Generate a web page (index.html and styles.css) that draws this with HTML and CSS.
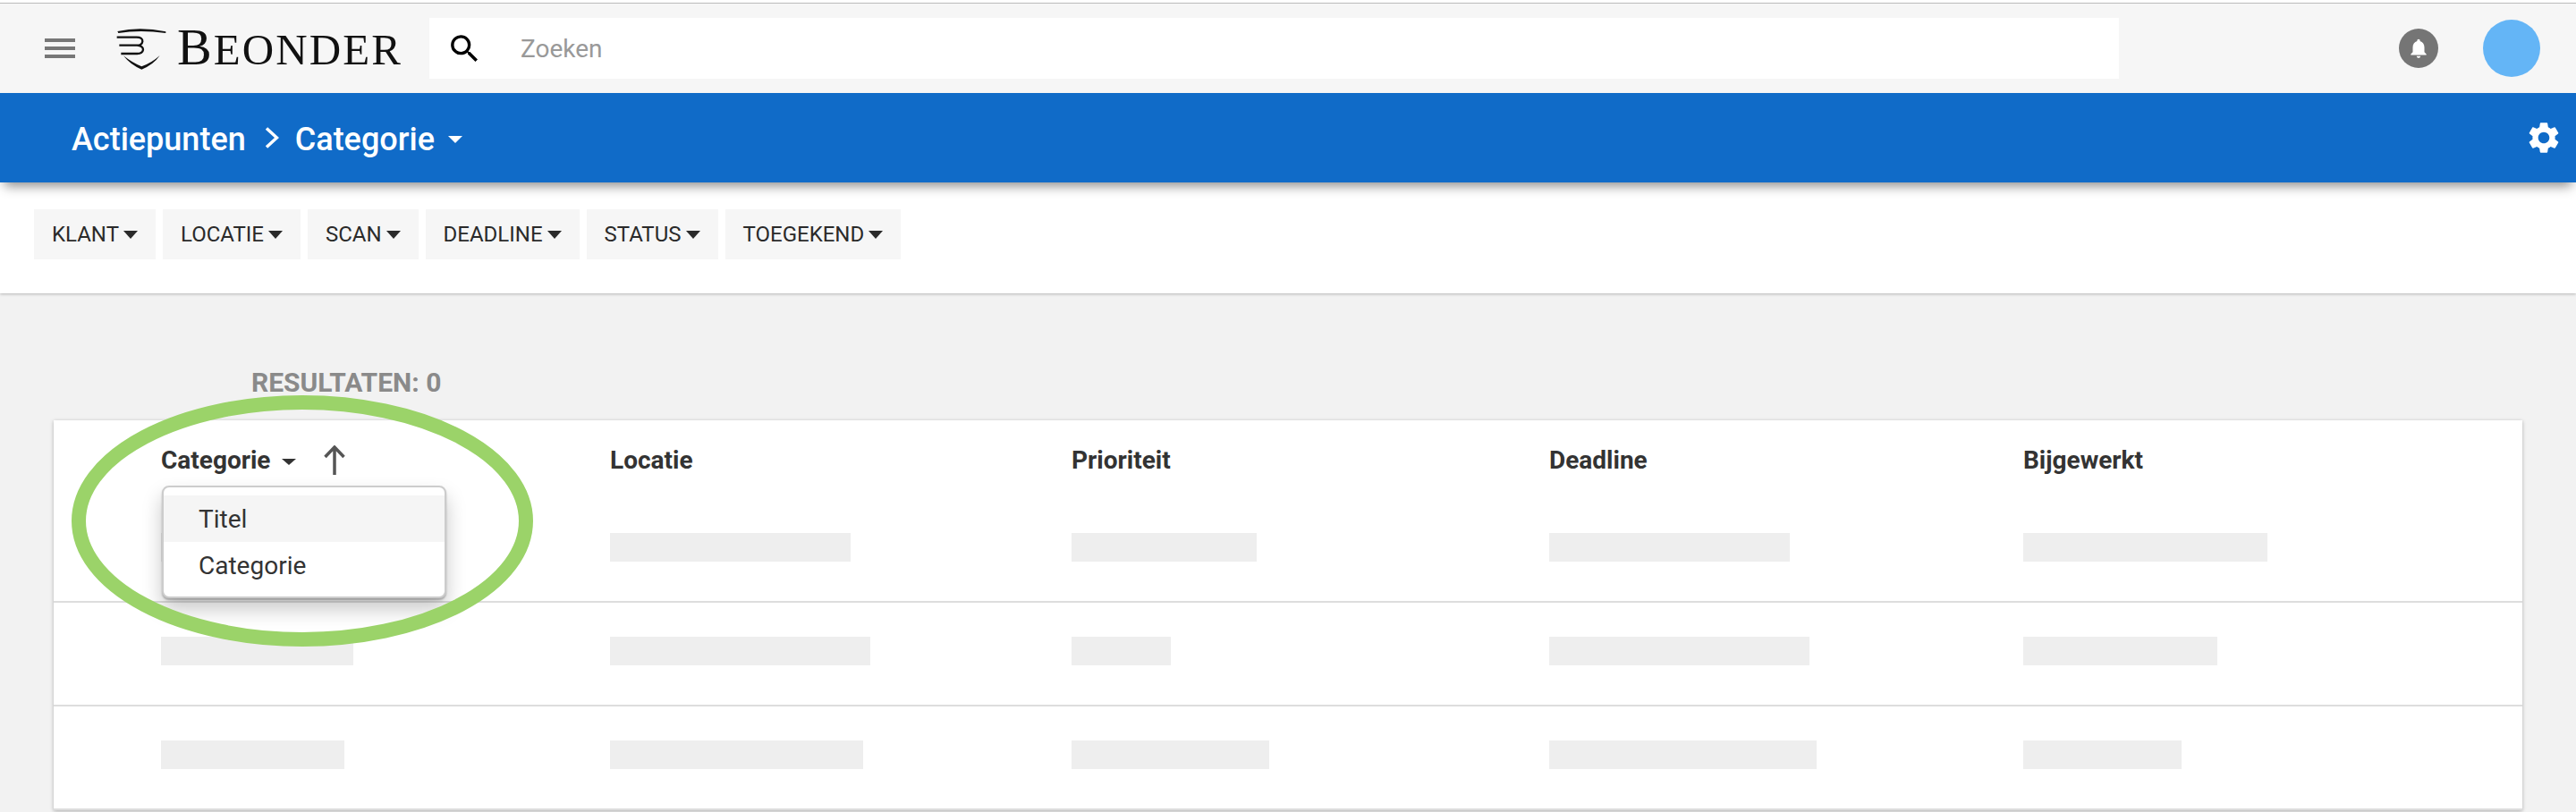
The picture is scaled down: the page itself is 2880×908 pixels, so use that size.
FILE: index.html
```html
<!DOCTYPE html>
<html lang="nl">
<head>
<meta charset="utf-8">
<title>Beonder - Actiepunten</title>
<link rel="stylesheet" href="styles.css">
</head>
<body>
<div class="page">
  <header class="topbar">
    <div class="hamburger"><span></span><span></span><span></span></div>
    <div class="brand">
      <svg class="brand-mark" viewBox="30 24 168 147" width="56" height="49">
        <path class="mark-fill" d="M34 39Q110 22 196 40L196 45Q110 33 37 45Z"/>
        <path class="mark-stroke" d="M32 59H98Q119 59 118 73Q116 86 100 86H40M100 86Q120 88 120 101Q118 114 100 114H46"/>
        <path class="mark-fill" d="M54 121Q86 146 115 157Q150 144 176 120Q156 150 115 167Q78 152 54 121Z"/>
      </svg>
      <div class="wordmark"><span class="wordmark-cap">B</span>EONDER</div>
    </div>
    <div class="search">
      <svg class="search-icon" viewBox="0 0 24 24" width="41" height="41"><path d="M15.5 14h-.79l-.28-.27A6.47 6.47 0 0 0 16 9.5 6.5 6.5 0 1 0 9.5 16c1.61 0 3.09-.59 4.23-1.57l.27.28v.79l5 4.99L20.49 19l-4.99-5zm-6 0C7.01 14 5 11.99 5 9.5S7.01 5 9.5 5 14 7.01 14 9.5 11.99 14 9.5 14z"/></svg>
      <span class="search-text">Zoeken</span>
    </div>
    <div class="bell">
      <svg viewBox="0 0 24 24" width="26" height="26"><path d="M12 22c1.1 0 2-.9 2-2h-4c0 1.1.9 2 2 2zm6-6v-5c0-3.07-1.63-5.64-4.5-6.32V4c0-.83-.67-1.5-1.5-1.5s-1.5.67-1.5 1.5v.68C7.64 5.36 6 7.92 6 11v5l-2 2v1h16v-1l-2-2z"/></svg>
    </div>
    <div class="avatar"></div>
  </header>

  <nav class="crumbbar">
    <span class="crumb">Actiepunten</span>
    <svg class="crumb-sep" viewBox="0 0 16 24" width="16" height="24"><path d="M2 1.5L13.5 12L2 22.5"/></svg>
    <span class="crumb">Categorie</span>
    <span class="crumb-caret"></span>
    <svg class="gear" viewBox="0 0 24 24" width="42" height="42"><path d="M19.14 12.94c.04-.3.06-.61.06-.94 0-.32-.02-.64-.07-.94l2.03-1.58a.49.49 0 0 0 .12-.61l-1.92-3.32a.488.488 0 0 0-.59-.22l-2.39.96c-.5-.38-1.03-.7-1.62-.94l-.36-2.54a.484.484 0 0 0-.48-.41h-3.84c-.24 0-.43.17-.47.41l-.36 2.54c-.59.24-1.13.57-1.62.94l-2.39-.96c-.22-.08-.47 0-.59.22L2.74 8.87c-.12.21-.08.47.12.61l2.03 1.58c-.05.3-.09.63-.09.94s.02.64.07.94l-2.03 1.58a.49.49 0 0 0-.12.61l1.92 3.32c.12.22.37.29.59.22l2.39-.96c.5.38 1.03.7 1.62.94l.36 2.54c.05.24.24.41.48.41h3.84c.24 0 .44-.17.47-.41l.36-2.54c.59-.24 1.13-.56 1.62-.94l2.39.96c.22.08.47 0 .59-.22l1.92-3.32c.12-.22.07-.47-.12-.61l-2.01-1.58zM12 15.6c-1.98 0-3.6-1.62-3.6-3.6s1.62-3.6 3.6-3.6 3.6 1.62 3.6 3.6-1.62 3.6-3.6 3.6z"/></svg>
  </nav>

  <section class="filters">
    <button class="filter">KLANT<span class="filter-caret"></span></button>
    <button class="filter">LOCATIE<span class="filter-caret"></span></button>
    <button class="filter">SCAN<span class="filter-caret"></span></button>
    <button class="filter">DEADLINE<span class="filter-caret"></span></button>
    <button class="filter">STATUS<span class="filter-caret"></span></button>
    <button class="filter">TOEGEKEND<span class="filter-caret"></span></button>
  </section>

  <main class="content">
    <div class="results">RESULTATEN: 0</div>
    <div class="card">
      <div class="row head">
        <div class="col-head">Categorie<span class="head-caret"></span>
          <svg class="sort-arrow" viewBox="0 0 24 34" width="24" height="34"><path d="M12 33V2M1.5 13L12 2L22.5 13"/></svg>
        </div>
        <div class="col-head">Locatie</div>
        <div class="col-head">Prioriteit</div>
        <div class="col-head">Deadline</div>
        <div class="col-head">Bijgewerkt</div>
      </div>
      <div class="row item">
        <div><div class="skeleton" style="width:215px"></div></div>
        <div><div class="skeleton" style="width:269px"></div></div>
        <div><div class="skeleton" style="width:207px"></div></div>
        <div><div class="skeleton" style="width:269px"></div></div>
        <div><div class="skeleton" style="width:273px"></div></div>
      </div>
      <div class="row item">
        <div><div class="skeleton" style="width:215px"></div></div>
        <div><div class="skeleton" style="width:291px"></div></div>
        <div><div class="skeleton" style="width:111px"></div></div>
        <div><div class="skeleton" style="width:291px"></div></div>
        <div><div class="skeleton" style="width:217px"></div></div>
      </div>
      <div class="row item">
        <div><div class="skeleton" style="width:205px"></div></div>
        <div><div class="skeleton" style="width:283px"></div></div>
        <div><div class="skeleton" style="width:221px"></div></div>
        <div><div class="skeleton" style="width:299px"></div></div>
        <div><div class="skeleton" style="width:177px"></div></div>
      </div>
      <div class="menu">
        <div class="menu-item active">Titel</div>
        <div class="menu-item">Categorie</div>
      </div>
    </div>
  </main>

  <svg class="highlight" viewBox="0 0 516 281" width="516" height="281"><ellipse cx="258" cy="140.5" rx="250" ry="132.5"/></svg>
</div>
</body>
</html>
```
FILE: styles.css
```css
* { box-sizing: border-box; }
html, body { margin: 0; height: 908px; overflow: hidden; }
body { background: #f2f2f2; font-family: Roboto, "Liberation Sans", sans-serif; color: #333; }
.page { position: relative; height: 908px; overflow: hidden; padding-top: 3px; background: #f2f2f2; }
.page::before { content: ""; position: absolute; left: 0; right: 0; top: 0; height: 3px; background: #fff; }

.topbar { display: flex; align-items: center; height: 101px; background: #f6f6f6; border-top: 1px solid #bbb; padding-left: 50px; }
.hamburger { display: flex; flex-direction: column; gap: 5px; width: 34px; }
.hamburger span { display: block; height: 4px; background: #777; }
.brand { display: flex; align-items: center; margin-left: 46px; width: 350px; }
.brand-mark { flex: none; }
.mark-fill { fill: #111; }
.mark-stroke { fill: none; stroke: #111; stroke-width: 7; }
.wordmark { margin-left: 12px; font-family: "Liberation Serif", serif; font-size: 49px; line-height: 58px; letter-spacing: 2.1px; color: #111; white-space: nowrap; }
.wordmark-cap { font-size: 58px; }
.search { display: flex; align-items: center; width: 1889px; height: 68px; background: #fff; padding-left: 19px; }
.search-icon { fill: #000; flex: none; }
.search-text { margin-left: 42px; font-size: 28px; color: #999; }
.bell { display: flex; align-items: center; justify-content: center; width: 44px; height: 44px; margin-left: 313px; border-radius: 50%; background: #757575; }
.bell svg { fill: #fff; }
.avatar { width: 64px; height: 64px; margin-left: 50px; border-radius: 50%; background: #64b5f6; }

.crumbbar { position: relative; z-index: 2; display: flex; align-items: center; height: 100px; padding: 0 15px 0 80px; background: #106bc8; color: #fff; box-shadow: 0 9px 12px -5px rgba(0,0,0,.45); }
.crumb { padding-top: 3px; font-size: 36px; font-weight: 500; line-height: 40px; }
.crumb-sep { margin: 0 18px 0 21px; fill: none; stroke: #fff; stroke-width: 3.5; }
.crumb-caret { margin: 4px 0 0 15px; border-style: solid; border-width: 8px 8px 0; border-color: #fff transparent transparent; }
.gear { margin-left: auto; fill: #fff; }

.filters { display: flex; gap: 8px; height: 124px; padding: 30px 38px; background: #fff; box-shadow: 0 1px 3px rgba(0,0,0,.25); }
.filter { display: flex; align-items: center; height: 56px; padding: 0 20px; border: 0; background: #f6f6f6; font: 400 24px Roboto, sans-serif; color: #2a2a2a; }
.filter-caret { margin-left: 5px; border-style: solid; border-width: 9px 8px 0; border-color: #2a2a2a transparent transparent; }

.content { padding: 0 60px; }
.results { margin-top: 80px; margin-bottom: 22px; padding-left: 221px; font-size: 30px; font-weight: 700; line-height: 40px; color: #8a8a8a; }
.card { position: relative; background: #fff; box-shadow: 0 1px 4px rgba(0,0,0,.28); }
.row { display: grid; grid-template-columns: 502px 516px 534px 530px 1fr; padding-left: 120px; }
.head { height: 88px; padding-top: 2px; align-items: center; }
.col-head { display: flex; align-items: center; font-size: 28px; font-weight: 700; line-height: 34px; color: #333; }
.head-caret { margin: 2px 0 0 12px; border-style: solid; border-width: 7px 8px 0; border-color: #333 transparent transparent; }
.sort-arrow { margin-left: 31px; fill: none; stroke: #555; stroke-width: 3.5; }
.item { height: 116px; padding-top: 38px; border-bottom: 2px solid #ddd; }
.skeleton { height: 32px; background: #eee; }

.menu { position: absolute; left: 121px; top: 73px; width: 318px; height: 126px; padding: 9px 0; border: 2px solid #ccc; border-radius: 8px; background: #fff; box-shadow: 0 2px 2px rgba(0,0,0,.25), 0 12px 22px rgba(0,0,0,.22); }
.menu-item { height: 52px; padding: 2px 0 0 39px; font-size: 28px; line-height: 50px; color: #333; }
.menu-item.active { background: #f5f5f5; }

.highlight { position: absolute; left: 80px; top: 442px; fill: none; stroke: #9bd369; stroke-width: 16; }
```
